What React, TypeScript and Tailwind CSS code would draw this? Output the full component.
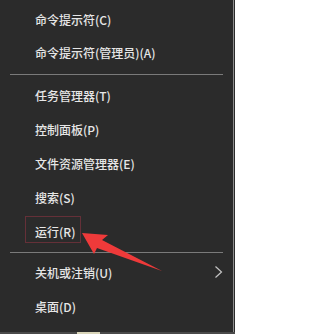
import React from 'react';

type Entry = { label: string; sub?: boolean; mark?: boolean } | 'sep';

const entries: Entry[] = [
  { label: '命令提示符(C)' },
  { label: '命令提示符(管理员)(A)' },
  'sep',
  { label: '任务管理器(T)' },
  { label: '控制面板(P)' },
  { label: '文件资源管理器(E)' },
  { label: '搜索(S)' },
  { label: '运行(R)', mark: true },
  'sep',
  { label: '关机或注销(U)', sub: true },
  { label: '桌面(D)' },
];

const Chevron = () => (
  <svg width="9" height="14" viewBox="0 0 9 14" className="absolute right-[10px] top-[9px]">
    <path d="M1.5 1.5 L7.5 7 L1.5 12.5" fill="none" stroke="#c4c4c4" strokeWidth="1.2" />
  </svg>
);

const App = () => {
  return (
    <div
      className="relative w-[235px] h-[334px] overflow-hidden bg-[#2b2b2b]"
      style={{ fontFamily: '"Noto Sans CJK SC", "Noto Sans", sans-serif' }}
    >
      <div className="flex flex-col h-[332px] w-[234px] border-r border-[#8c8c8c] pt-[3px]">
        {entries.map((e, i) =>
          e === 'sep' ? (
            <div key={i} className={`flex items-center px-[10px] ${i === 2 ? 'h-[9px]' : 'h-[7px]'}`}>
              <div className="h-px w-full bg-[#7a7a7a]" />
            </div>
          ) : (
            <div key={i} className={`relative flex items-center pl-[35px] ${i === 0 ? 'h-[33px]' : 'h-[34px]'}`}>
              <span className="text-[12px] leading-none text-[#e6e6e6] font-medium">{e.label}</span>
              {e.mark && (
                <div className="absolute left-[25px] top-[1px] w-[56px] h-[27px] border border-[#653038]" />
              )}
              {e.sub && <Chevron />}
            </div>
          )
        )}
      </div>
      <div className="flex h-[2px] bg-[#4a4a4a]">
        <div className="ml-[77px] w-[23px] bg-[#d8d4b8]" />
      </div>
      <svg className="absolute left-0 top-0" width="235" height="334" viewBox="0 0 235 334">
        <polygon
          points="82,233 108,235 102,240 162,271 97,248 94,254"
          fill="#ee3a3a"
        />
      </svg>
    </div>
  );
};

export default App;
